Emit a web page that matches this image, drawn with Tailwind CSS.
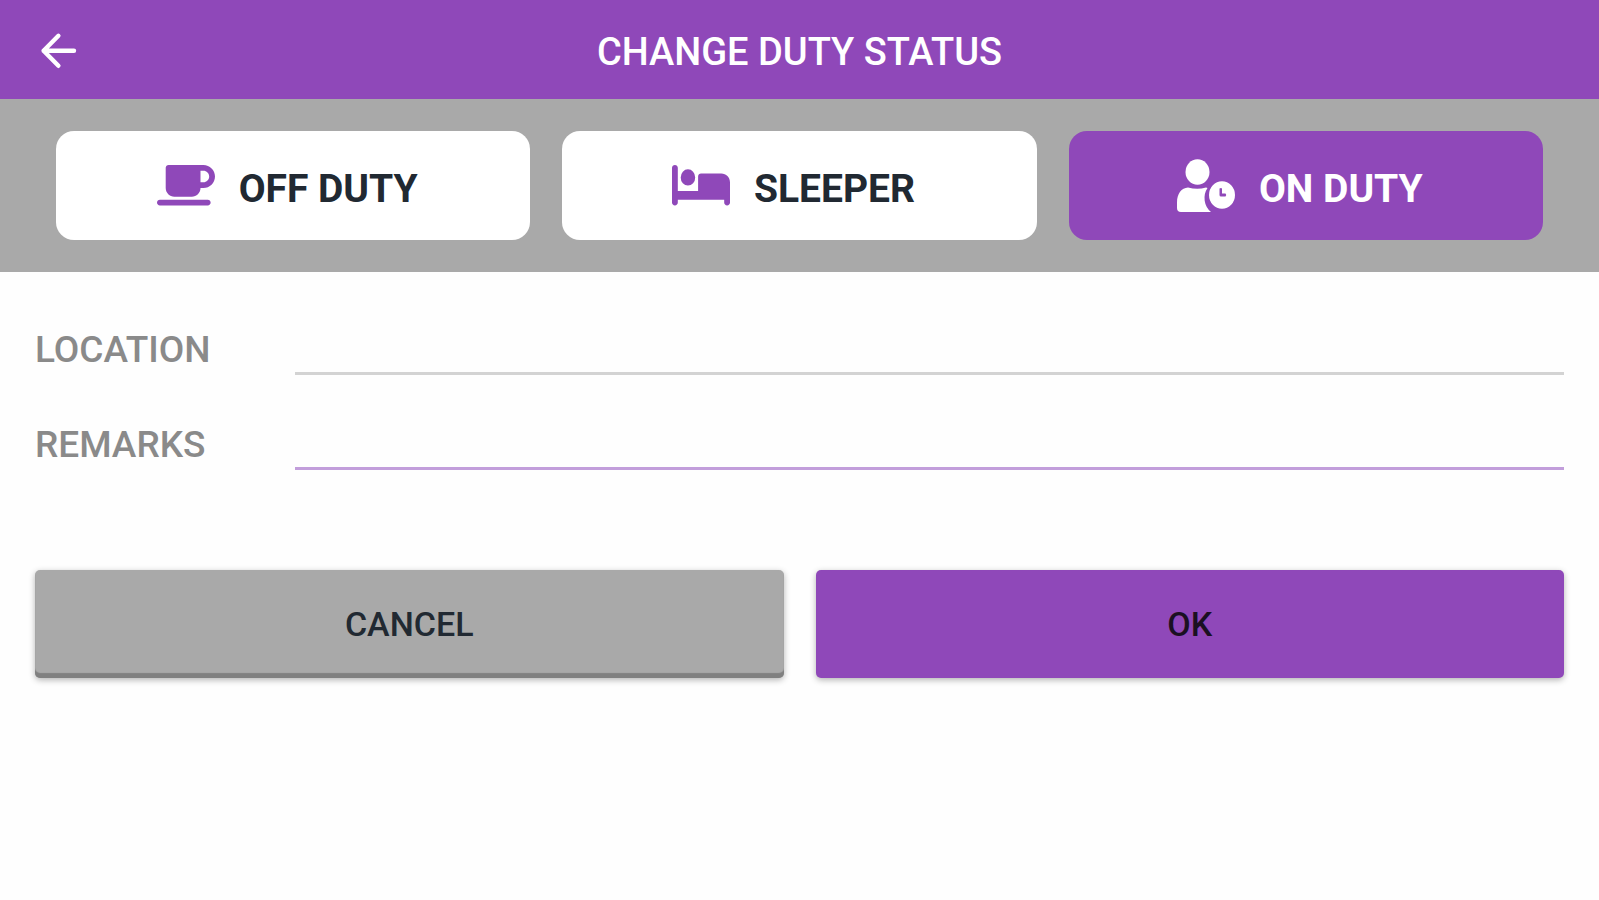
<!DOCTYPE html>
<html lang="en">
<head>
<meta charset="utf-8">
<meta name="viewport" content="width=device-width, initial-scale=1">
<title>Change Duty Status</title>
<script src="https://cdn.jsdelivr.net/npm/@tailwindcss/browser@4"></script>
</head>
<body class="min-h-screen bg-[#fefefe] font-[Roboto,sans-serif]">
<header class="grid h-[99px] grid-cols-[1fr_auto_1fr] items-center bg-[#8f48b9] px-9 text-white">
  <button type="button" aria-label="Back" class="justify-self-start">
    <svg class="size-12" viewBox="0 0 24 24" fill="none" stroke="currentColor" stroke-width="2.2" stroke-linecap="round" stroke-linejoin="round"><path d="M19 12.400H3.800M11.200 4.900 3.800 12.400l7.400 7.500"/></svg>
  </button>
  <h1 class="pt-1 text-[38px] leading-12 font-medium">CHANGE DUTY STATUS</h1>
</header>
<main>
  <nav aria-label="Duty status" class="grid grid-cols-3 gap-8 bg-[#a9a9a9] px-14 py-8 text-[39px] font-bold text-[#212932]">
    <button type="button" class="flex h-[109px] items-center justify-center gap-6 rounded-[18px] bg-white pr-3">
      <svg class="w-[58px] text-[#8f48b9]" viewBox="0 0 640 512" fill="currentColor"><path d="M96 64c0-17.700 14.300-32 32-32H512c70.700 0 128 57.300 128 128s-57.300 128-128 128H480c0 53-43 96-96 96H192c-53 0-96-43-96-96V64zM480 224h32c35.300 0 64-28.700 64-64s-28.700-64-64-64H480V224zM32 416H560c17.700 0 32 14.300 32 32s-14.300 32-32 32H32c-17.700 0-32-14.300-32-32s14.300-32 32-32z"/></svg>
      <span class="pt-2">OFF DUTY</span>
    </button>
    <button type="button" class="flex h-[109px] items-center justify-center gap-6 rounded-[18px] bg-white pr-3">
      <svg class="w-[58px] text-[#8f48b9]" viewBox="0 0 640 512" fill="currentColor"><path d="M32 32c17.700 0 32 14.300 32 32V320H288V160c0-17.700 14.300-32 32-32H544c53 0 96 43 96 96V448c0 17.700-14.300 32-32 32s-32-14.300-32-32V416H64v32c0 17.700-14.300 32-32 32s-32-14.300-32-32V64C0 46.300 14.300 32 32 32zm144 48a80 90 0 1 1 0 180 80 90 0 1 1 0-180z"/></svg>
      <span class="pt-2">SLEEPER</span>
    </button>
    <button type="button" aria-pressed="true" class="flex h-[109px] items-center justify-center gap-6 rounded-[18px] bg-[#8f48b9] pr-3 text-white">
      <svg class="w-[58px]" viewBox="0 0 58 53" fill="currentColor"><ellipse cx="20.500" cy="13" rx="12" ry="12.700"/><path d="M11 28.500q9.500 2.500 18 0l1.500.5a16.500 17.500 0 0 0 3.500 24H4q-4 0-4-4v-5.500c0-9 4.500-14.500 11-15z"/><path fill-rule="evenodd" d="M45 22.200a13 13.800 0 1 0 0 27.600a13 13.800 0 1 0 0-27.600zM42.500 29.500q1.500-1 2.500 0v5h3.500q1.500 1.500 0 3h-4.500q-1.500 0-1.500-1.500z"/></svg>
      <span class="pt-2">ON DUTY</span>
    </button>
  </nav>
  <form class="px-[35px] pt-[52px]">
    <div class="grid grid-cols-[260px_1fr] gap-y-11 text-[37px] text-[#8a8a8a]">
      <label for="location" class="pt-px leading-[50px] font-medium">LOCATION</label>
      <input id="location" type="text" class="h-[51px] border-b-3 border-[#d3d3d3] outline-none">
      <label for="remarks" class="pt-px leading-[50px] font-medium">REMARKS</label>
      <input id="remarks" type="text" class="h-[51px] border-b-3 border-[#c29edb] outline-none">
    </div>
    <div class="mt-[100px] grid grid-cols-2 gap-8 text-[34px] font-medium">
      <button type="button" class="h-[108px] rounded-[5px] bg-[#a9a9a9] text-[#212932] shadow-[inset_0_-5px_1px_#808080,0_2px_6px_rgba(0,0,0,0.3)]">CANCEL</button>
      <button type="submit" class="h-[108px] rounded-[5px] bg-[#8f48b9] text-[#1b1022] shadow-[0_2px_6px_rgba(0,0,0,0.3)]">OK</button>
    </div>
  </form>
</main>
</body>
</html>
